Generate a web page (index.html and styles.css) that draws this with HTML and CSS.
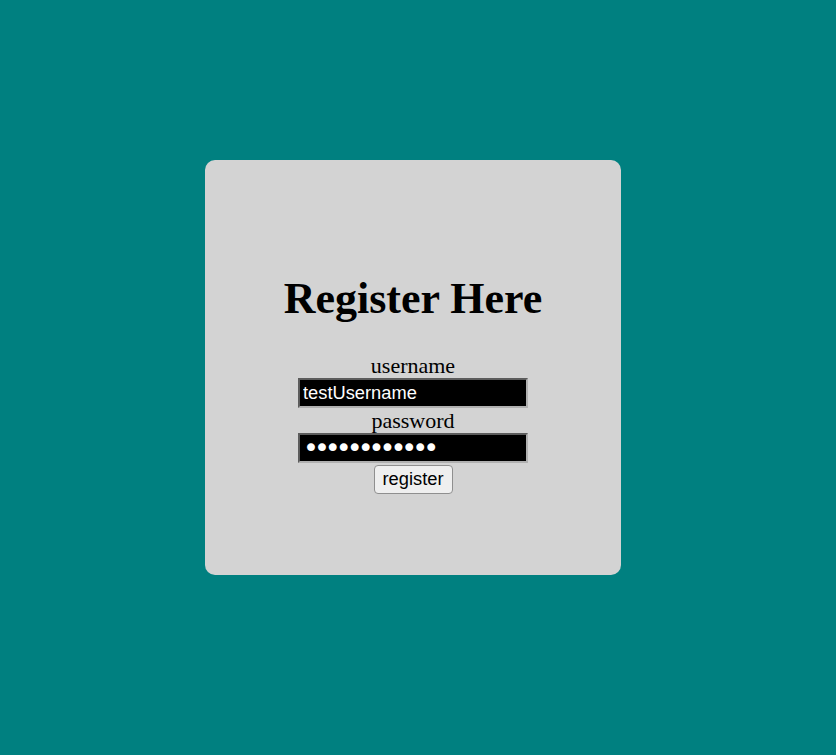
FILE: index.html
```html
<!DOCTYPE html>
<html>
<head>
<meta charset="utf-8">
<link rel="stylesheet" href="styles.css">
</head>
<body>
<div class="page">
  <div class="card">
    <h1 class="title">Register Here</h1>
    <form class="form">
      <label class="label" for="u">username</label>
      <input class="field" id="u" type="text" value="testUsername">
      <label class="label" for="p">password</label>
      <input class="field field-pass" id="p" type="password" value="testPassword">
      <button class="btn" type="button">register</button>
    </form>
  </div>
</div>
</body>
</html>
```
FILE: styles.css
```css
html, body {
  margin: 0;
  padding: 0;
  background: #008080;
  height: 100%;
}
.page {
  display: flex;
  justify-content: flex-start;
  padding-top: 160px;
  padding-left: 205px;
  font-family: "Liberation Serif", "Times New Roman", serif;
}
.card {
  width: 416px;
  height: 415px;
  box-sizing: border-box;
  background: #d3d3d3;
  border-radius: 10px;
  display: flex;
  flex-direction: column;
  align-items: center;
  padding-top: 115px;
}
.title {
  margin: 0 0 30px;
  font-size: 44px;
  font-weight: bold;
  line-height: 48.7px;
  color: #000;
}
.form {
  display: flex;
  flex-direction: column;
  align-items: center;
}
.label {
  font-size: 22px;
  line-height: 24px;
  color: #000;
}
.field {
  width: 230px;
  height: 30px;
  box-sizing: border-box;
  margin: 0 0 1px;
  padding: 1px 3px;
  border: 2px inset #b0b0b0;
  background: #000;
  color: #fff;
  font-family: "Liberation Sans", Arial, sans-serif;
  font-size: 18.3px;
}
.field-pass {
  font-family: "DejaVu Sans", sans-serif;
  font-size: 27px;
  line-height: 24px;
  letter-spacing: -5px;
  padding: 0 2px 0 3px;
}
.btn {
  width: 79px;
  height: 29px;
  box-sizing: border-box;
  margin-top: 1px;
  padding: 0 6px;
  border: 1px solid #8f8f8f;
  border-radius: 4px;
  background: #efefef;
  color: #000;
  font-family: "Liberation Sans", Arial, sans-serif;
  font-size: 18.3px;
}
```
